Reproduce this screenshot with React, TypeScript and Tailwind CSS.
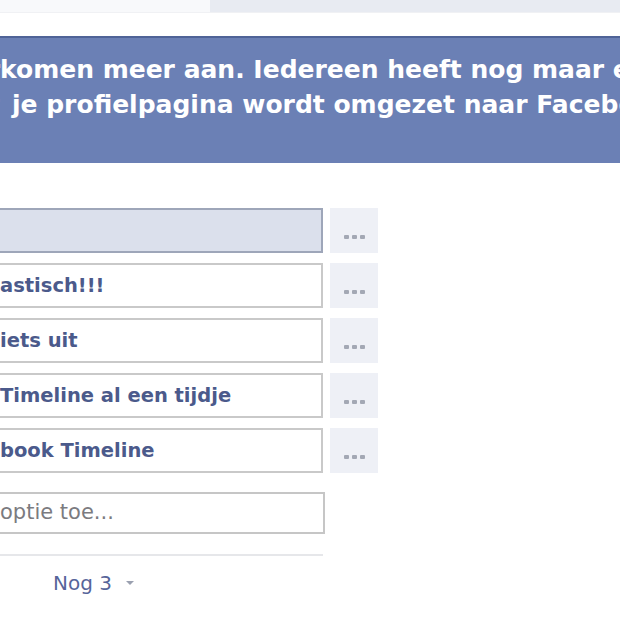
const options = [
  { hidden: "", text: "", active: true },
  { hidden: "Fant", text: "astisch!!!", active: false },
  { hidden: "Maakt me n", text: "iets uit", active: false },
  { hidden: "Ik heb ", text: "Timeline al een tijdje", active: false },
  { hidden: "Ik wil geen Face", text: "book Timeline", active: false },
];

// keeps a cut-off prefix left of the visible edge
const Clipped = ({ hidden, text }: { hidden: string; text: string }) => (
  <span className="flex whitespace-nowrap">
    <span className="flex w-0 justify-end">{hidden}</span>
    <span>{text}</span>
  </span>
);

const Dots = () => (
  <div className="flex gap-[3px] pt-[27px]">
    <span className="h-[4px] w-[5px] rounded-[1px] bg-[#a3a8b4]" />
    <span className="h-[4px] w-[5px] rounded-[1px] bg-[#a3a8b4]" />
    <span className="h-[4px] w-[5px] rounded-[1px] bg-[#a3a8b4]" />
  </div>
);

const App = () => {
  return (
    <div className="h-[620px] w-[620px] overflow-hidden bg-white font-['DejaVu_Sans',sans-serif]">
      <div className="flex h-[12px]">
        <div className="w-[210px] bg-[#f8f9fb]" />
        <div className="flex-1 bg-[#e8ebf2]" />
      </div>
      <div className="h-[24px] border-t border-[#f0f1f4]" />

      <div className="h-[127px] overflow-hidden border-t-2 border-[#4f6397] bg-[#6b80b5] pt-[14px] text-[25px] leading-[35px] font-bold text-white">
        <Clipped hidden="Er " text="komen meer aan. Iedereen heeft nog maar een paar dagen" />
        <span className="flex whitespace-nowrap">
          <span className="flex w-0 justify-end">voordat</span>
          <span className="ml-[12px]">je profielpagina wordt omgezet naar Facebook Timeline.</span>
        </span>
      </div>

      <div className="mt-[45px] flex w-[380px] flex-col gap-[10px]">
        {options.map((o, i) => (
          <div key={i} className="flex gap-[7px]">
            <div
              className={
                o.active
                  ? "flex h-[45px] w-[323px] items-center overflow-hidden border-y-2 border-r-2 border-[#9ea6b9] bg-[#dbe0ec]"
                  : "flex h-[45px] w-[323px] items-center overflow-hidden border-y-2 border-r-2 border-[#c9c9c9] bg-white text-[19.5px] font-bold text-[#4b5a8b]"
              }
            >
              <Clipped hidden={o.hidden} text={o.text} />
            </div>
            <div className="flex h-[45px] w-[48px] justify-center bg-[#eef0f6]">
              <Dots />
            </div>
          </div>
        ))}
      </div>

      <div className="mt-[19px] flex h-[42px] w-[325px] items-center overflow-hidden border-y-2 border-r-2 border-[#c6c6c6] text-[21px] text-[#7b7b80]">
        <Clipped hidden="Voeg een " text="optie toe..." />
      </div>

      <div className="mt-[20px] h-[2px] w-[323px] bg-[#e6e7ea]" />

      <div className="flex items-center gap-[14px] pt-[12px] pl-[53px] text-[20px] text-[#56659a]">
        <span>Nog 3</span>
        <span className="h-0 w-0 border-x-[4px] border-t-[4px] border-x-transparent border-t-[#9aa0b0]" />
      </div>
    </div>
  );
};

export default App;
